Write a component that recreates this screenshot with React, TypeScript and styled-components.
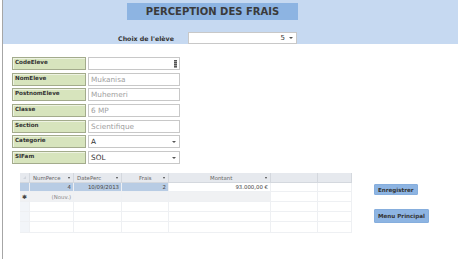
import React from "react";
import styled, { createGlobalStyle } from "styled-components";

const GlobalStyle = createGlobalStyle`
    html, body {
        margin: 0;
        padding: 0;
        background: #ffffff;
    }
    * {
        box-sizing: border-box;
    }
`;

const font = `"DejaVu Sans", "Liberation Sans", sans-serif`;

const Page = styled.div`
    width: 458px;
    height: 259px;
    margin-left: 2px;
    border-left: 1px solid #a6a6a6;
    font-family: ${font};
    color: #333;
    overflow: hidden;
`;

const Header = styled.header`
    height: 44px;
    background: #c6d9f1;
    display: flex;
    flex-direction: column;
    align-items: flex-start;
    padding-top: 3px;
`;

const TitleBar = styled.div`
    margin-left: 124px;
    width: 171px;
    height: 17px;
    background: #8db4e2;
    display: flex;
    align-items: center;
    justify-content: center;
    font-size: 10px;
    font-weight: bold;
    color: #3a3a3a;
`;

const ChoiceRow = styled.div`
    margin-top: 12px;
    display: flex;
    align-items: center;
`;

const ChoiceLabel = styled.span`
    width: 172px;
    padding-right: 1px;
    text-align: right;
    font-size: 6.3px;
    font-weight: bold;
    color: #333;
`;

const Combo = styled.div<{ $width: number }>`
    width: ${(p) => p.$width}px;
    height: 12px;
    background: #fff;
    border: 1px solid #c8c8c8;
    display: flex;
    align-items: center;
    justify-content: flex-end;
    padding-right: 3px;
    font-size: 7px;
    color: #333;
`;

const Arrow = styled.span`
    width: 0;
    height: 0;
    margin-left: 4px;
    border-left: 2px solid transparent;
    border-right: 2px solid transparent;
    border-top: 2px solid #555;
`;

const ChoiceCombo = styled(Combo)`
    margin-left: 13px;
`;

const Form = styled.div`
    display: flex;
    flex-direction: column;
    gap: 2.7px;
    padding: 13px 0 0 9px;
`;

const FieldRow = styled.div`
    display: flex;
    gap: 2px;
    height: 13px;
`;

const Label = styled.div`
    width: 74px;
    height: 13px;
    background: #d7e4bd;
    border: 1px solid #a3ab8c;
    box-shadow: inset 1px 1px 0 #eef3e2;
    font-size: 5.6px;
    font-weight: bold;
    color: #333;
    padding: 1px 0 0 2px;
`;

const Input = styled.div<{ $dark?: boolean }>`
    width: 92px;
    height: 13px;
    border: 1px solid #c8c8c8;
    background: #fff;
    display: flex;
    align-items: center;
    justify-content: space-between;
    padding: 0 3px 0 2px;
    font-size: 7.3px;
    color: ${(p) => (p.$dark ? "#333" : "#a0a0a0")};
`;

const Spinner = styled.span`
    width: 3px;
    height: 8px;
    margin-right: -1px;
    background: repeating-linear-gradient(#555 0 1px, #999 1px 2px);
`;

const Bottom = styled.div`
    display: flex;
    padding: 9px 0 0 17px;
`;

const Sheet = styled.div`
    width: 332px;
    height: 60px;
    border-right: 1px solid #a6a6a6;
    display: grid;
    grid-template-columns: 10px 44px 48px 47px 102px 47px 34px;
    grid-template-rows: 10px 9px 10px 10px 10px 11px;
    font-size: 5.4px;
    color: #555;
`;

const HeadCell = styled.div<{ $center?: boolean }>`
    background: #e6e9ee;
    border-right: 1px solid #d4d8de;
    border-bottom: 1px solid #d4d8de;
    display: flex;
    align-items: center;
    justify-content: ${(p) => (p.$center ? "center" : "space-between")};
    padding: 0 3px;
    color: #666;
`;

const HeadArrow = styled.span`
    width: 0;
    height: 0;
    border-left: 1.5px solid transparent;
    border-right: 1.5px solid transparent;
    border-top: 2px solid #444;
`;

const Cell = styled.div<{ $bg: string; $color?: string }>`
    background: ${(p) => p.$bg};
    border-right: 1px solid #eef0f3;
    border-bottom: 1px solid #eef0f3;
    display: flex;
    align-items: center;
    justify-content: flex-end;
    padding-right: 2px;
    color: ${(p) => p.$color ?? "#444"};
`;

const Selector = styled(Cell)`
    justify-content: center;
    padding: 0;
    color: #444;
    font-size: 6px;
`;

const Buttons = styled.div`
    display: flex;
    flex-direction: column;
    align-items: flex-start;
    gap: 14px;
    margin-left: 22px;
    padding-top: 11px;
`;

const Button = styled.button<{ $height: number }>`
    height: ${(p) => p.$height}px;
    padding: 0 3px;
    background: #8db4e2;
    border: 1px solid #86aedd;
    border-radius: 1px;
    font-family: ${font};
    font-size: 5.6px;
    font-weight: bold;
    color: #333;
    white-space: nowrap;
`;

const fields = [
    { label: "CodeEleve", value: "", spin: true },
    { label: "NomEleve", value: "Mukanisa" },
    { label: "PostnomEleve", value: "Muhemeri" },
    { label: "Classe", value: "6 MP" },
    { label: "Section", value: "Scientifique" },
    { label: "Categorie", value: "A", combo: true },
    { label: "SIFam", value: "SOL", combo: true },
];

const heads = ["NumPerce", "DatePerc", "Frais"];

export default function App() {
    const sel = "#b8cce4";
    const fresh = "#f0f1f3";
    const empty = "#ffffff";

    return (
        <>
            <GlobalStyle />
            <Page>
                <Header>
                    <TitleBar>PERCEPTION DES FRAIS</TitleBar>
                    <ChoiceRow>
                        <ChoiceLabel>Choix de l'elève</ChoiceLabel>
                        <ChoiceCombo $width={109}>
                            5<Arrow />
                        </ChoiceCombo>
                    </ChoiceRow>
                </Header>

                <Form>
                    {fields.map((f) => (
                        <FieldRow key={f.label}>
                            <Label>{f.label}</Label>
                            <Input $dark={f.combo || f.spin}>
                                <span>{f.value}</span>
                                {f.spin && <Spinner />}
                                {f.combo && <Arrow />}
                            </Input>
                        </FieldRow>
                    ))}
                </Form>

                <Bottom>
                    <Sheet>
                        <HeadCell $center>
                            <svg width="5" height="5" viewBox="0 0 5 5">
                                <path d="M0 5 L5 0 L5 5 Z" fill="#cfd4db" />
                            </svg>
                        </HeadCell>
                        {heads.map((h) => (
                            <HeadCell key={h}>
                                <span style={{ marginLeft: h === "Frais" ? 14 : 0 }}>{h}</span>
                                <HeadArrow />
                            </HeadCell>
                        ))}
                        <HeadCell>
                            <span style={{ marginLeft: 38 }}>Montant</span>
                            <HeadArrow />
                        </HeadCell>
                        <HeadCell />
                        <HeadCell />

                        <Selector $bg={sel} />
                        <Cell $bg={sel}>4</Cell>
                        <Cell $bg={sel}>10/09/2013</Cell>
                        <Cell $bg={sel}>2</Cell>
                        <Cell $bg={empty}>93.000,00 €</Cell>
                        <Cell $bg={empty} />
                        <Cell $bg={empty} />

                        <Selector $bg={fresh}>✱</Selector>
                        <Cell $bg={fresh} $color="#8a8a8a">(Nouv.)</Cell>
                        <Cell $bg={fresh} />
                        <Cell $bg={fresh} />
                        <Cell $bg={fresh} />
                        <Cell $bg={empty} />
                        <Cell $bg={empty} />

                        {[0, 1, 2].map((r) =>
                            [0, 1, 2, 3, 4, 5, 6].map((c) => (
                                <Cell key={`${r}-${c}`} $bg={c === 0 ? "#f2f5f9" : empty} />
                            ))
                        )}
                    </Sheet>
                    <Buttons>
                        <Button $height={11}>Enregistrer</Button>
                        <Button $height={14}>Menu Principal</Button>
                    </Buttons>
                </Bottom>
            </Page>
        </>
    );
}
